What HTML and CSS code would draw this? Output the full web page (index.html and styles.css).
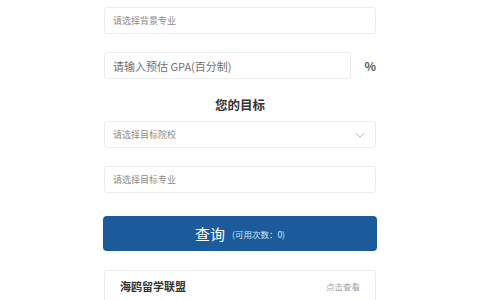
FILE: index.html
```html
<!DOCTYPE html>
<html lang="zh-CN">

<head>
    <meta charset="UTF-8">
    <meta name="viewport" content="width=device-width, initial-scale=1.0">
    <link rel="stylesheet" href="styles.css">
</head>

<body>
    <div id="form">
        <div class="field small">请选择背景专业</div>

        <div class="gpa-row">
            <div class="field gpa">请输入预估 GPA(百分制)</div>
            <span class="percent">%</span>
        </div>

        <div class="title">您的目标</div>

        <div class="field small select">
            请选择目标院校
            <svg class="chevron" width="10" height="6" viewBox="0 0 10 6">
                <path d="M1 1 L5 5 L9 1" fill="none" stroke="#b8b8b8" stroke-width="1"/>
            </svg>
        </div>

        <div class="field small target">请选择目标专业</div>

        <button class="query">查询<span class="count">(可用次数：0)</span></button>

        <div class="card">
            <span class="card-name">海鸥留学联盟</span>
            <span class="card-link">点击查看</span>
        </div>
    </div>
</body>

</html>
```

FILE: styles.css
```css
body {
    margin: 0;
    padding: 0;
    background-color: #fff;
    font-family: "Noto Sans CJK SC", "Noto Sans", sans-serif;
    color: #333;
}

#form {
    width: 272px;
    margin: 0 auto;
    padding-top: 7px;
}

.field {
    box-sizing: border-box;
    height: 27px;
    border: 1px solid #ececec;
    border-radius: 3px;
    padding: 0 8px;
    display: flex;
    align-items: center;
    color: #8a8a8a;
    font-size: 11px;
}

.small {
    font-size: 9px;
}

.gpa-row {
    display: flex;
    align-items: center;
    margin-top: 18px;
}

.gpa {
    width: 249px;
    color: #707070;
}

.percent {
    margin-left: 13px;
    font-size: 12px;
    font-weight: bold;
    color: #555;
}

.title {
    text-align: center;
    font-size: 12.5px;
    font-weight: bold;
    color: #333;
    margin-top: 17px;
    line-height: 18px;
}

.select {
    margin-top: 7px;
    justify-content: space-between;
}

.chevron {
    margin-right: 2px;
}

.target {
    margin-top: 18px;
}

.query {
    display: flex;
    align-items: center;
    justify-content: center;
    width: 274px;
    margin: 23px 0 0 -1px;
    height: 35px;
    border: none;
    border-radius: 4px;
    background-color: #1b5b9b;
    color: #fff;
    font-family: inherit;
    font-size: 15px;
}

.count {
    font-size: 8.5px;
    margin-left: 7px;
    color: #dbe6f2;
}

.card {
    box-sizing: border-box;
    height: 40px;
    margin-top: 19px;
    border: 1px solid #ececec;
    border-radius: 3px;
    padding: 0 15px 8px 15px;
    display: flex;
    align-items: center;
    justify-content: space-between;
}

.card-name {
    font-size: 11px;
    font-weight: bold;
    color: #333;
}

.card-link {
    font-size: 8.5px;
    color: #a0a0a0;
}
```
